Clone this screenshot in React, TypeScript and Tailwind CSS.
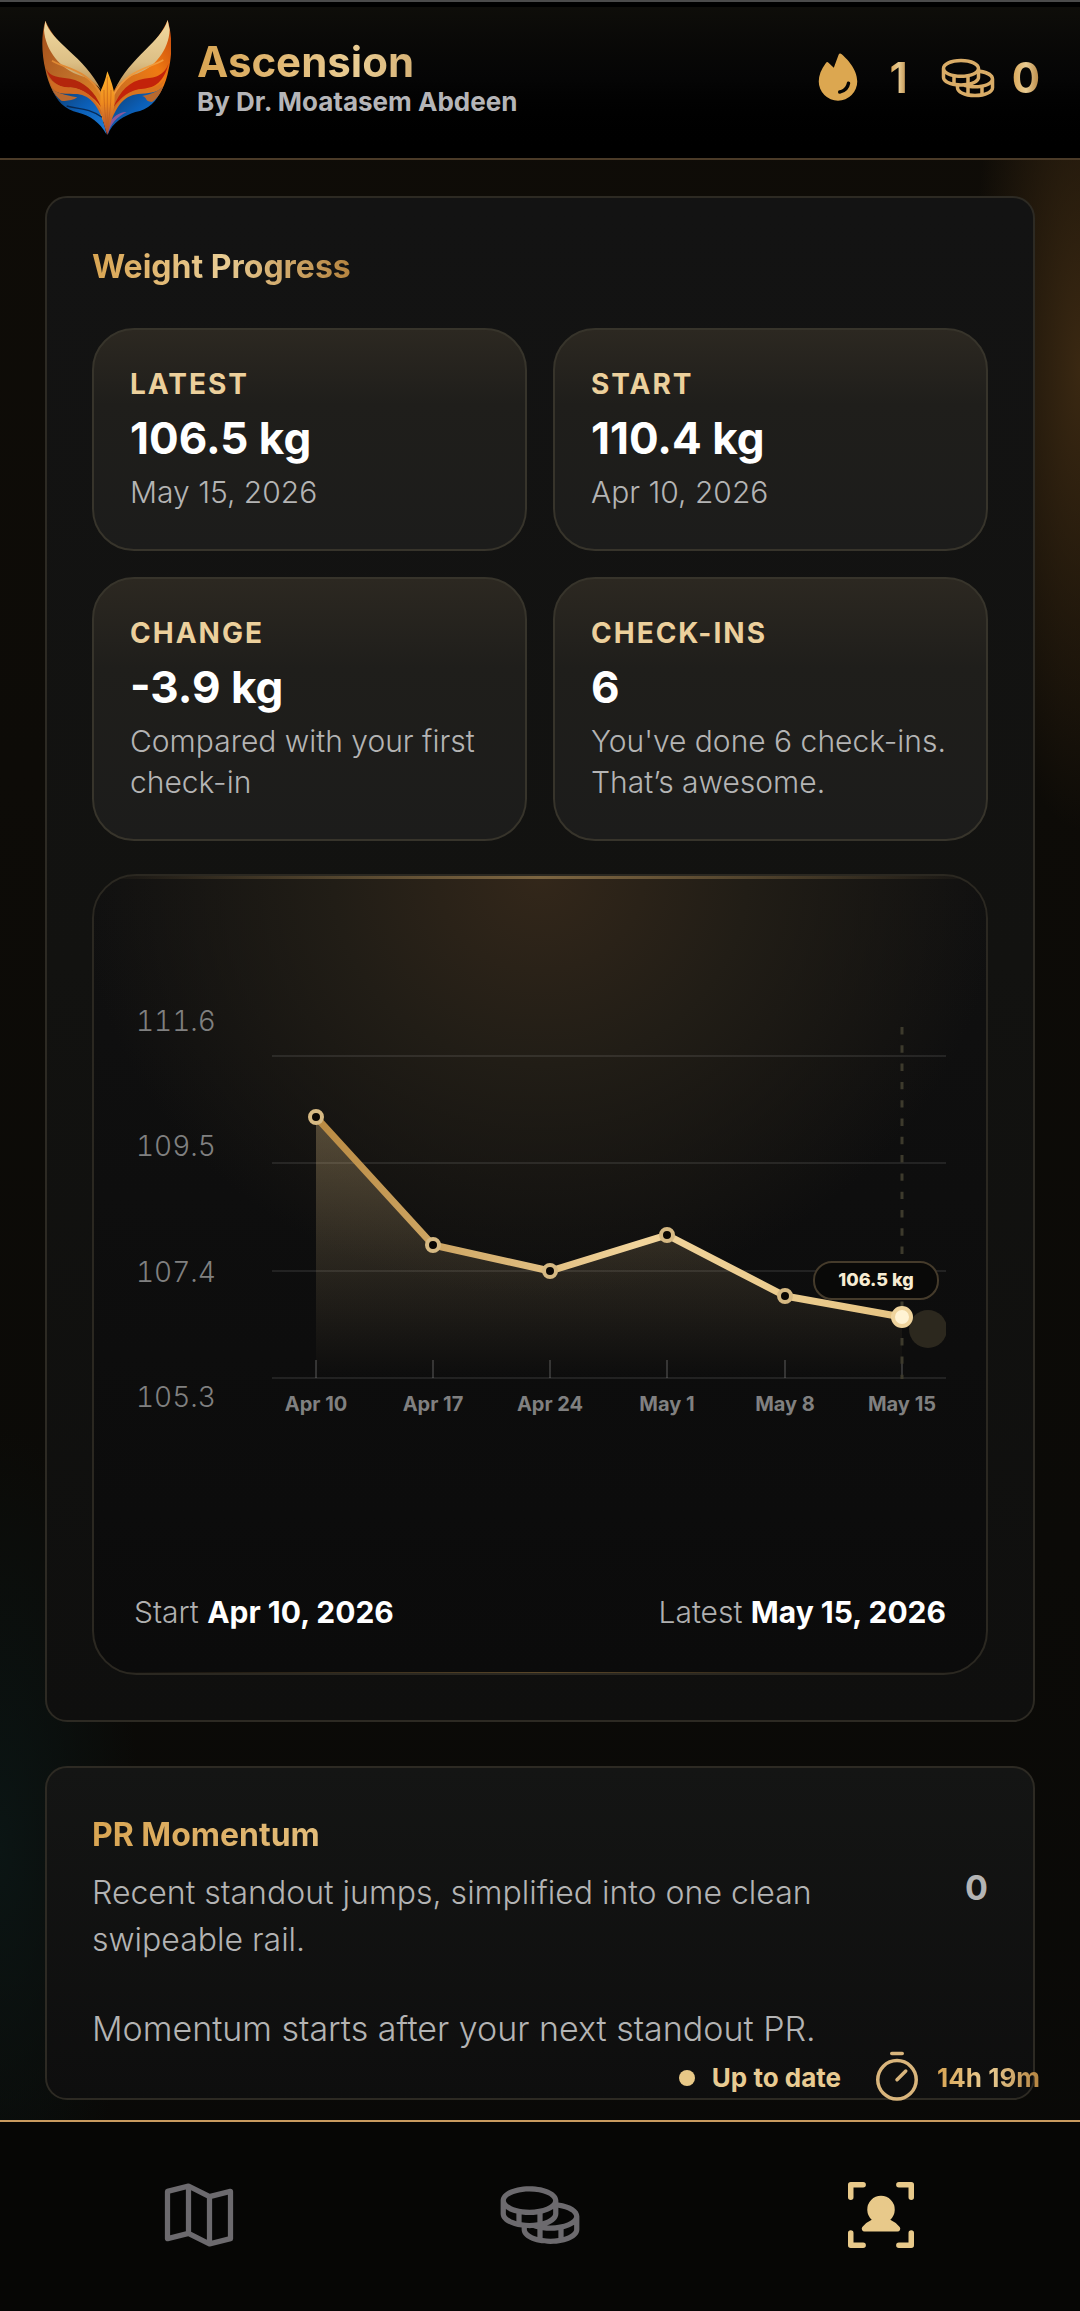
import React from 'react';
import { PiCoins, PiFireFill, PiMapTrifold, PiTimer, PiUserFocusFill } from 'react-icons/pi';

const stats = [
  { label: 'Latest', value: '106.5 kg', description: 'May 15, 2026' },
  { label: 'Start', value: '110.4 kg', description: 'Apr 10, 2026' },
  { label: 'Change', value: '-3.9 kg', description: 'Compared with your first check-in' },
  { label: 'Check-ins', value: '6', description: "You've done 6 check-ins. That’s awesome." },
];

const points = [
  { label: 'Apr 10', x: 44, y: 112 },
  { label: 'Apr 17', x: 161, y: 240 },
  { label: 'Apr 24', x: 278, y: 266 },
  { label: 'May 1', x: 395, y: 230 },
  { label: 'May 8', x: 513, y: 291 },
  { label: 'May 15', x: 630, y: 312 },
];

const yLabels = ['111.6', '109.5', '107.4', '105.3'];
const gridLines = [51, 158, 266, 373];

const goldText =
  'bg-gradient-to-r from-[#d9a552] via-[#e9cc93] to-[#b5843f] bg-clip-text text-transparent';

const Logo: React.FC = () => (
  <svg viewBox="66 30 387 345" className="w-[129px] h-[115px] shrink-0" aria-hidden="true">
    <defs>
      <linearGradient id="cream" x1="0" y1="0" x2="0" y2="1">
        <stop offset="0" stopColor="#f3d9a0" />
        <stop offset="0.6" stopColor="#dcbf85" />
        <stop offset="1" stopColor="#b98a4c" />
      </linearGradient>
      <linearGradient id="flameLeft" x1="0" y1="0" x2="1" y2="1">
        <stop offset="0" stopColor="#a34d18" />
        <stop offset="0.5" stopColor="#c0702a" />
        <stop offset="1" stopColor="#f08a18" />
      </linearGradient>
      <linearGradient id="flameRight" x1="1" y1="0" x2="0" y2="1">
        <stop offset="0" stopColor="#c4440c" />
        <stop offset="0.35" stopColor="#ef7a12" />
        <stop offset="1" stopColor="#b9672a" />
      </linearGradient>
      <linearGradient id="blueWing" x1="0" y1="0" x2="1" y2="1">
        <stop offset="0" stopColor="#123a66" />
        <stop offset="0.5" stopColor="#0b5fb8" />
        <stop offset="1" stopColor="#1f7fd8" />
      </linearGradient>
      <linearGradient id="beak" x1="0" y1="0" x2="0" y2="1">
        <stop offset="0" stopColor="#ffb52c" />
        <stop offset="0.5" stopColor="#ee8a1e" />
        <stop offset="1" stopColor="#a5483c" />
      </linearGradient>
    </defs>
    {/* left wing */}
    <path d="M76 32C62 78 66 136 76 178C84 222 106 270 140 290L262 340L246 250C200 170 110 110 76 32Z" fill="url(#flameLeft)" />
    <path d="M78 176C92 204 120 200 150 206C190 214 226 244 244 292C222 262 190 236 152 232C120 234 90 218 78 176Z" fill="#b3260c" />
    <path d="M84 200C104 228 132 232 160 234C204 240 238 280 256 330C226 286 190 262 150 262C116 262 94 238 84 200Z" fill="#cf6a22" />
    <path d="M96 236C112 254 140 250 172 252C212 256 244 292 260 374C240 336 208 316 176 308C132 298 110 272 96 236Z" fill="url(#blueWing)" />
    <path d="M96 236C112 250 132 254 172 262C158 272 138 274 124 272C112 262 102 252 96 236Z" fill="#b8682e" />
    <path d="M140 288C172 298 206 292 246 322" fill="none" stroke="#082a55" strokeWidth="4" />
    <path d="M76 32C92 96 196 140 243 240C232 226 216 208 184 198C120 178 76 120 72 60Z" fill="url(#cream)" />
    <path d="M96 152C140 178 204 178 244 256" fill="none" stroke="#e08a34" strokeWidth="5" />
    {/* right wing */}
    <path d="M443 30C458 78 456 136 446 178C438 222 420 262 384 286L262 340L278 250C318 170 410 110 443 30Z" fill="url(#flameRight)" />
    <path d="M446 160C432 200 400 204 372 206C330 212 298 244 280 292C302 262 330 238 370 236C404 234 432 216 446 160Z" fill="#c3230a" />
    <path d="M438 200C420 232 392 236 364 238C320 242 286 280 268 330C298 286 334 262 374 262C404 260 424 238 438 200Z" fill="#d9741e" />
    <path d="M426 232C410 250 384 250 354 252C312 256 280 292 263 374C278 336 312 318 346 306C384 300 412 276 426 232Z" fill="url(#blueWing)" />
    <path d="M430 228C412 246 394 252 366 258C384 262 372 274 396 276C414 264 424 246 430 228Z" fill="#b8682e" />
    <path d="M263 374C272 340 290 322 320 306C300 304 280 320 266 340Z" fill="#8a5a9c" />
    <path d="M443 30C424 96 330 140 284 240C294 224 312 204 342 194C404 176 446 120 449 60Z" fill="url(#cream)" />
    <path d="M430 150C386 176 318 180 280 256" fill="none" stroke="#f09a3c" strokeWidth="5" />
    {/* centre */}
    <path d="M262 184C274 214 280 232 284 258C284 306 272 340 262 375C250 340 236 290 243 240C250 226 256 210 262 184Z" fill="url(#beak)" />
    <path d="M262 200V360M252 240C252 290 256 320 261 350M273 240C273 290 268 320 263 350" fill="none" stroke="#c2601a" strokeWidth="2" />
  </svg>
);

const Header: React.FC = () => (
  <header className="sticky top-0 z-20 border-t-2 border-t-[#4b4b4b] border-b-2 border-b-[#4b3b28] bg-gradient-to-b from-[#0f0e0a] via-[#050505] to-black">
    <div className="h-[5px] bg-black" />
    <div className="flex h-[151px] items-start justify-between pl-[42px] pr-10 pt-[13px]">
      <div className="flex items-center gap-[26px]">
        <Logo />
        <div>
          <h1 className={`text-[42px] leading-[48px] font-bold ${goldText}`}>Ascension</h1>
          <p className="text-[26px] leading-8 font-bold text-[#b5b5b8]">By Dr. Moatasem Abdeen</p>
        </div>
      </div>
      <div className="flex h-[115px] items-center gap-8 text-[42px] leading-[48px] font-bold">
        <div className="flex items-center gap-6">
          <PiFireFill className="size-14 text-[#dca750]" />
          <span className={goldText}>1</span>
        </div>
        <div className="flex items-center gap-4">
          <PiCoins className="size-14 text-[#d9ac67]" />
          <span className={goldText}>0</span>
        </div>
      </div>
    </div>
  </header>
);

const WeightChart: React.FC = () => {
  const line = points.map((p) => `${p.x},${p.y}`).join(' ');
  const last = points[points.length - 1];

  return (
    <svg viewBox="0 0 674 416" className="min-w-0 flex-1" role="img" aria-label="Weight by check-in">
      <defs>
        <linearGradient id="weightLine" gradientUnits="userSpaceOnUse" x1="44" y1="0" x2="630" y2="0">
          <stop offset="0" stopColor="#b98a42" />
          <stop offset="0.55" stopColor="#f2d59c" />
          <stop offset="1" stopColor="#e6c483" />
        </linearGradient>
        <linearGradient id="weightArea" gradientUnits="userSpaceOnUse" x1="0" y1="112" x2="0" y2="373">
          <stop offset="0" stopColor="#e9c88d" stopOpacity="0.3" />
          <stop offset="0.55" stopColor="#e9c88d" stopOpacity="0.13" />
          <stop offset="1" stopColor="#e9c88d" stopOpacity="0" />
        </linearGradient>
      </defs>
      {gridLines.map((y) => (
        <line key={y} x1="0" x2="674" y1={y} y2={y} stroke="#ffffff" strokeOpacity="0.09" strokeWidth="2" />
      ))}
      <polygon points={`44,373 ${line} 630,373`} fill="url(#weightArea)" />
      {points.map((p) => (
        <line key={p.label} x1={p.x} x2={p.x} y1="355" y2="373" stroke="#ffffff" strokeOpacity="0.16" strokeWidth="2" />
      ))}
      <line x1={last.x} x2={last.x} y1="22" y2="374" stroke="#3d3a2c" strokeWidth="3" strokeDasharray="7.4 10.9" />
      <polyline points={line} fill="none" stroke="url(#weightLine)" strokeWidth="7" strokeLinejoin="round" />
      <circle cx="656" cy="324" r="19" fill="#2c281e" />
      {points.slice(0, -1).map((p) => (
        <circle key={p.label} cx={p.x} cy={p.y} r="6" fill="#0b0703" stroke="#d6b983" strokeWidth="4" />
      ))}
      <circle cx={last.x} cy={last.y} r="9" fill="#fff3d3" stroke="#efd49d" strokeWidth="4" />
      <rect x="542" y="257" width="124" height="37" rx="18" fill="#090908" stroke="#453b2b" strokeWidth="2" />
      <text x="604" y="281" textAnchor="middle" fill="#f7ecd2" className="text-[18px] font-extrabold">
        106.5 kg
      </text>
      {points.map((p) => (
        <text key={p.label} x={p.x} y="406" textAnchor="middle" fill="#808080" className="text-[20px] font-bold">
          {p.label}
        </text>
      ))}
    </svg>
  );
};

const WeightProgress: React.FC = () => (
  <section className="rounded-[22px] border-2 border-[#2d2a23] bg-gradient-to-b from-[#131313] via-[#121210] to-[#0f0f0e] p-[45px]">
    <h2 className={`mb-[37px] w-fit text-[32px] leading-[48px] font-bold ${goldText}`}>Weight Progress</h2>

    <div className="grid grid-cols-2 gap-[26px]">
      {stats.map((stat) => (
        <div
          key={stat.label}
          className="rounded-[42px] border-2 border-[#37342b] bg-linear-[to_bottom,#2c2821_0%,#1f1e1b_34%,#1c1c1b_100%] p-9"
        >
          <h3 className="text-[28px] leading-9 font-bold uppercase tracking-[2px] text-[#ecd09c]">{stat.label}</h3>
          <p className="mt-3 text-[44px] leading-[48px] font-bold text-white">{stat.value}</p>
          <p className="mt-[10px] text-[30px] leading-[41px] font-light text-[#b4b4b4]">{stat.description}</p>
        </div>
      ))}
    </div>

    <div className="relative mt-[33px] overflow-hidden rounded-[44px] border-2 border-[#2b2821] bg-[radial-gradient(ellipse_460px_420px_at_50%_0%,#33271a_0%,#211d16_45%,transparent_100%),linear-gradient(to_bottom,#101010,#0b0b0b)] px-10 pt-[129px] pb-10">
      <div className="absolute inset-x-0 top-0 h-[3px] bg-gradient-to-r from-transparent via-[#7c6541] to-transparent" />
      <div className="flex">
        <div className="flex w-[138px] flex-col justify-between pb-2 pl-[2px] text-[28px] leading-8 font-light tabular-nums text-[#808080]">
          {yLabels.map((label) => (
            <span key={label}>{label}</span>
          ))}
        </div>
        <WeightChart />
      </div>
      <div className="mt-[170px] flex items-center justify-between text-[30px] leading-[42px] font-light text-[#b0b0b0]">
        <p>
          Start <strong className="font-bold text-white">Apr 10, 2026</strong>
        </p>
        <p>
          Latest <strong className="font-bold text-white">May 15, 2026</strong>
        </p>
      </div>
      <div className="absolute inset-x-0 bottom-0 h-px bg-gradient-to-r from-transparent via-[#5a4729] to-transparent" />
    </div>
  </section>
);

const PrMomentum: React.FC = () => (
  <section className="mt-11 rounded-[22px] border-2 border-[#2d2a23] bg-gradient-to-b from-[#141514] to-[#0e0e0e] px-[45px] pt-[45px] pb-[46px]">
    <div className="flex items-center justify-between gap-10">
      <div className="max-w-[760px]">
        <h2 className={`text-[32px] leading-[44px] font-bold ${goldText}`}>PR Momentum</h2>
        <p className="mt-3 text-[32px] leading-[47px] font-light text-[#b4b4b4]">
          Recent standout jumps, simplified into one clean swipeable rail.
        </p>
      </div>
      <span className="text-[34px] leading-[44px] font-bold text-[#b4b4b4]">0</span>
    </div>
    <p className="mt-[42px] text-[34px] leading-[47px] font-light text-[#b4b4b4]">
      Momentum starts after your next standout PR.
    </p>
  </section>
);

const BottomNav: React.FC = () => (
  <div className="sticky bottom-0 z-20 mt-auto">
    <div className="absolute right-10 bottom-full mb-[14px] flex items-center text-[26px] leading-8 font-bold">
      <span className="size-4 rounded-full bg-[#e8c887]" />
      <span className="ml-[17px] text-[#e8cb92]">Up to date</span>
      <PiTimer className="ml-7 size-14 text-[#d9b57c]" />
      <span className={`ml-3 ${goldText}`}>14h 19m</span>
    </div>
    <nav className="grid h-[191px] grid-cols-3 items-center border-t-2 border-[#c99b60] bg-[#060605] px-7 pb-1">
      <button type="button" aria-label="Map" className="mx-auto text-[#6c6a6e]">
        <PiMapTrifold className="size-[84px]" />
      </button>
      <button type="button" aria-label="Coins" className="mx-auto text-[#6c6a6e]">
        <PiCoins className="size-[84px]" />
      </button>
      <button type="button" aria-label="Profile" aria-current="page" className="mx-auto text-[#e8c98a]">
        <PiUserFocusFill className="size-[88px]" />
      </button>
    </nav>
  </div>
);

const App: React.FC = () => {
  return (
    <div className="flex min-h-screen flex-col bg-[radial-gradient(ellipse_110px_460px_at_100%_16%,#3a2812_0%,transparent_100%),radial-gradient(ellipse_140px_420px_at_0%_80%,#0b1514_0%,transparent_100%),linear-gradient(to_bottom,#0f0c07,#090907)] font-[Inter,'Noto_Sans',sans-serif]">
      <Header />
      <main className="px-[45px] pt-9 pb-5">
        <WeightProgress />
        <PrMomentum />
      </main>
      <BottomNav />
    </div>
  );
};

export default App;
